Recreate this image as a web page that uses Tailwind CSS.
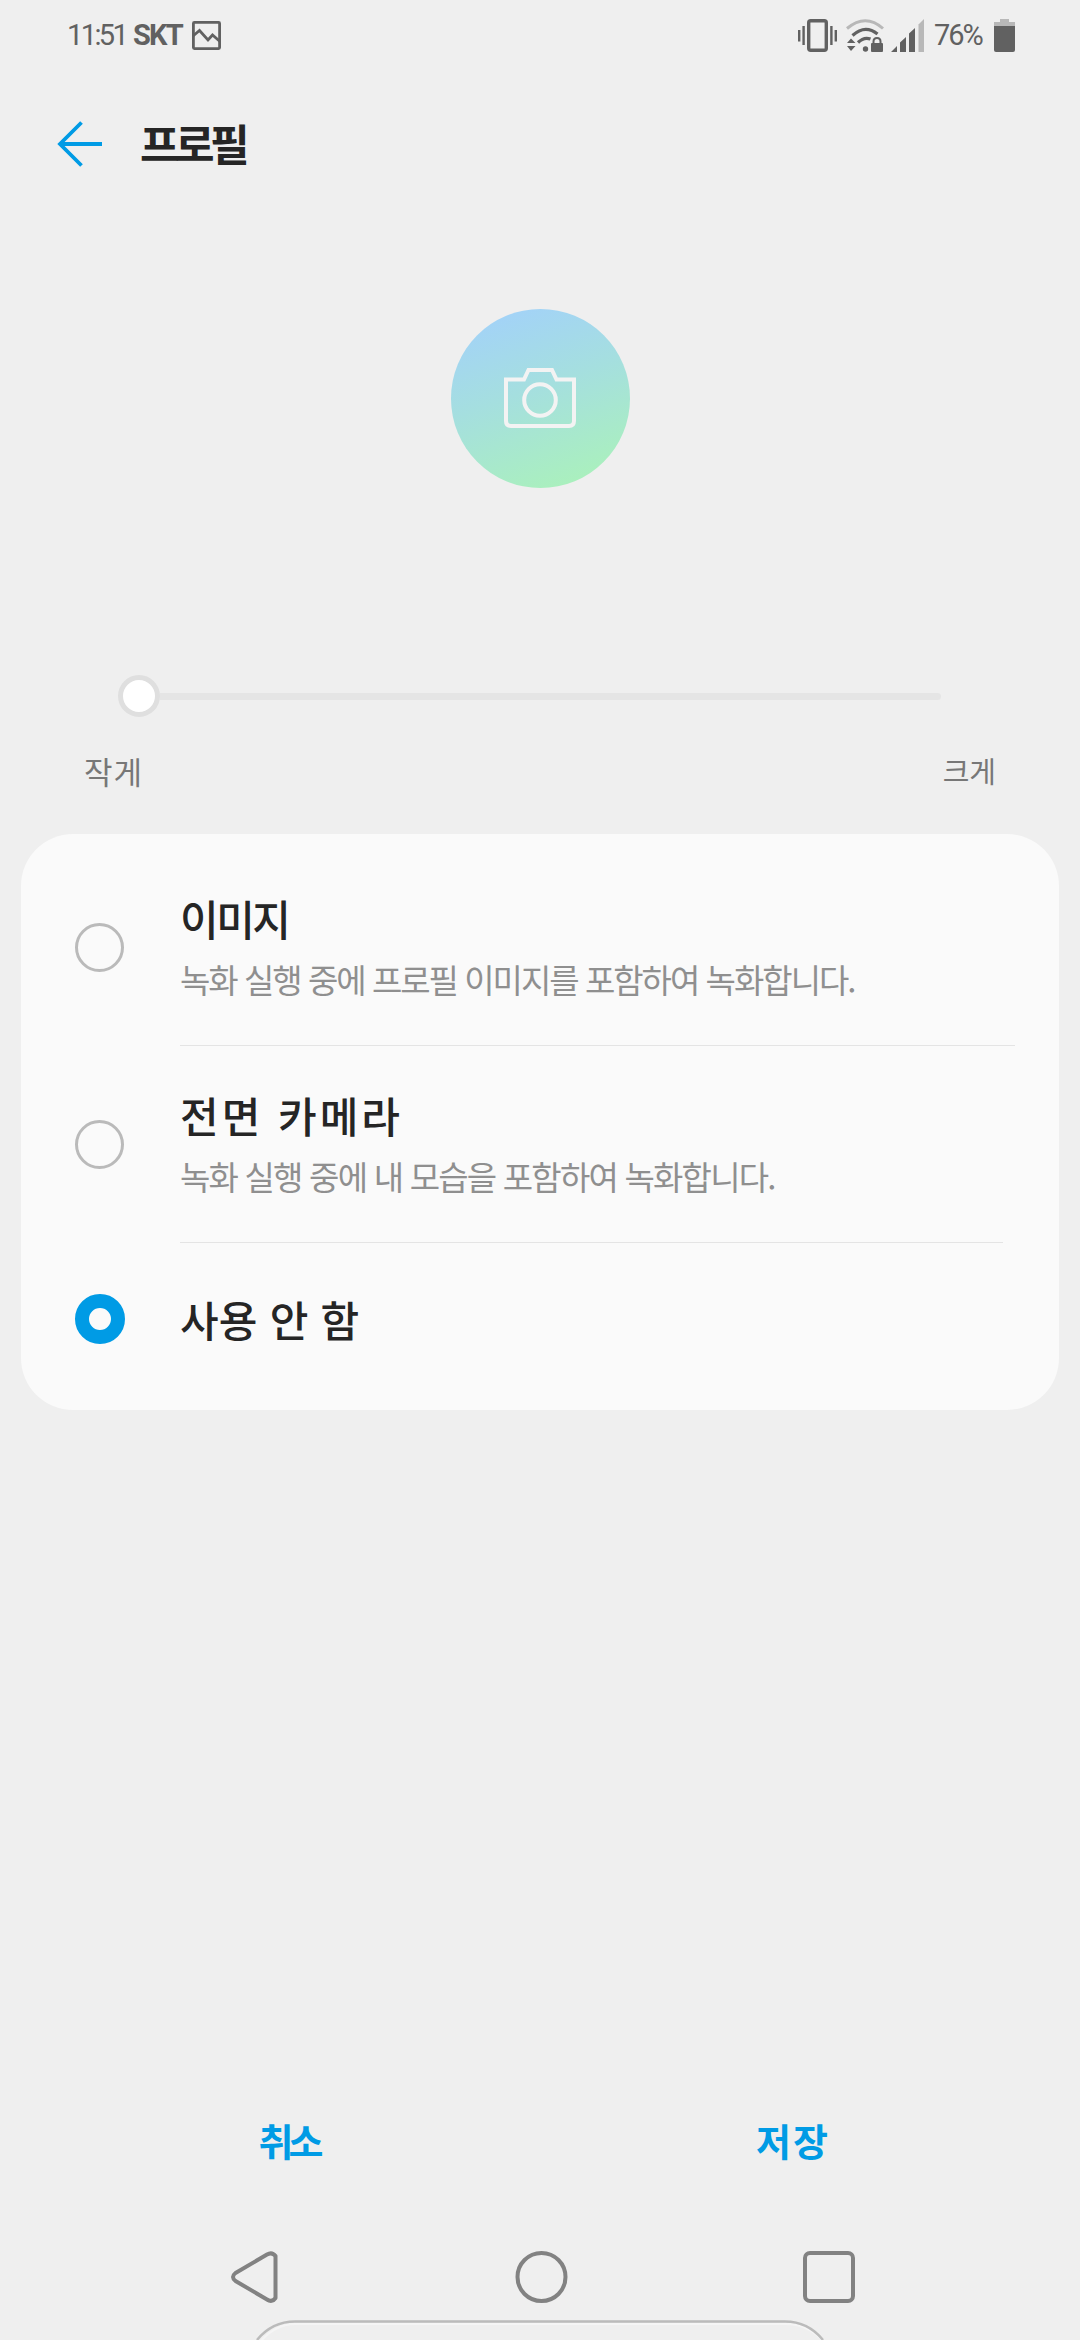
<!DOCTYPE html>
<html lang="ko">
<head>
    <meta charset="UTF-8">
    <meta name="viewport" content="width=device-width, initial-scale=1.0">
    <title>프로필</title>
    <script src="https://cdn.jsdelivr.net/npm/@tailwindcss/browser@4"></script>
</head>
<body class="bg-[#efefef] font-['Noto_Sans_CJK_KR','Noto_Sans',sans-serif]">
<div class="w-[1080px] h-[2340px] flex flex-col overflow-hidden">

    <!-- Status bar -->
    <header class="h-[70px] shrink-0 flex items-center justify-between pl-[67px] pr-[65px] text-[#616161] font-['Liberation_Sans_Narrow','Roboto',sans-serif] whitespace-nowrap">
        <div class="flex items-center">
            <span class="w-[66px] pt-[2px] text-[29px] tracking-[-2.6px]">11:51</span>
            <span class="w-[59px] pt-[2px] text-[29px] font-bold tracking-[-1.8px]">SKT</span>
            <svg class="w-[29px] h-[29px]" viewBox="0 0 29 29" fill="none" stroke="currentColor" stroke-width="2.8">
                <rect x="1.4" y="1.4" width="26.2" height="26.2" rx="1"/>
                <path d="M1 15 L7.5 9.5 L16 19 L20.5 14 L28 20.5"/>
            </svg>
        </div>
        <div class="flex items-center">
            <!-- Vibrate -->
            <svg class="w-[39px] h-[33px]" viewBox="0 0 39 33" fill="none" stroke="currentColor">
                <rect x="10.7" y="1.7" width="17.6" height="29.6" rx="2" stroke-width="3.4"/>
                <path d="M1.2 11V22.5M5.6 7V26M33.4 7V26M37.8 11V22.5" stroke-width="2.4"/>
            </svg>
            <!-- Wifi -->
            <svg class="w-[39px] h-[33px] ml-[9px]" viewBox="0 0 39 33" fill="none" stroke="currentColor">
                <path d="M1 9.5 Q19.500 -6 37 9.500" stroke="#b8b8b8" stroke-width="3"/>
                <path d="M6.500 16.500 Q19 5 31.500 15" stroke-width="3.200"/>
                <path d="M12 23.500 Q18 17.500 24.500 20" stroke-width="3.200"/>
                <circle cx="19.500" cy="30" r="2.700" fill="currentColor" stroke="none"/>
                <path d="M1 24 L5 19.500 L9.500 24Z M1 27 H9.500 L5 32Z" fill="currentColor" stroke="none"/>
                <rect x="25" y="24" width="12" height="9" rx="1" fill="currentColor" stroke="none"/>
                <path d="M27.500 25 V22.500 Q27.500 19 31 19 T34.500 22.500 V25" stroke-width="2"/>
            </svg>
            <!-- Signal -->
            <svg class="w-[33px] h-[33px] ml-[6px]" viewBox="0 0 33 33" fill="currentColor">
                <path d="M0 33 L6 27 V33Z M9 33 V23.500 L15 18 V33Z M18 33 V14.500 L24 9 V33Z"/>
                <path d="M27.500 33 V5.500 L33 0 V33Z" fill="#b8b8b8"/>
            </svg>
            <span class="ml-[10px] w-[60px] pt-[2px] text-[29px] tracking-[-2px]">76%</span>
            <!-- Battery -->
            <svg class="w-[21px] h-[33px]" viewBox="0 0 21 33" fill="currentColor">
                <path d="M6 0 H15 V3 H21 V7 H0 V3 H6Z" fill="#b8b8b8"/>
                <path d="M0 7 H21 V31 Q21 33 19 33 H2 Q0 33 0 31Z"/>
            </svg>
        </div>
    </header>

    <!-- Title bar -->
    <div class="h-[148px] shrink-0 flex items-center pl-[57px] text-[#252525]">
        <svg class="w-[46px] h-[46px]" viewBox="0 0 46 46" fill="none" stroke="#009be5" stroke-width="3.8">
            <path d="M24.500 1.500 L3 23 L24.500 44.500 M3 23 H45"/>
        </svg>
        <h1 class="ml-[37px] pb-[3px] text-[43px] font-bold tracking-[-4.5px] leading-none">프로필</h1>
    </div>

    <!-- Profile picture -->
    <div class="mt-[91px] mx-auto w-[179px] h-[179px] shrink-0 rounded-full flex items-center justify-center bg-linear-[160deg,#a3d3f7_10%,#a5dfdf_45%,#aaf0bd_90%]">
        <svg class="w-[72px] h-[60px] mb-[2px]" viewBox="0 0 72 60" fill="none" stroke="#f3f3f3" stroke-width="4">
            <path d="M2 11.500 H20 L24.500 2 H48 L52.500 11.500 H70 V53 Q70 58 65 58 H7 Q2 58 2 53Z"/>
            <circle cx="36" cy="32" r="15.800"/>
        </svg>
    </div>

    <!-- Size slider -->
    <div class="mt-[187px] ml-[118px] w-[823px] h-[42px] shrink-0 flex items-center">
        <div class="w-[42px] h-[42px] shrink-0 rounded-full bg-white border-[5px] border-[#dfdfdf]"></div>
        <div class="h-[7px] grow bg-[#e5e5e5] rounded-r-full"></div>
    </div>
    <div class="mt-[29px] h-[50px] shrink-0 flex items-center justify-between pl-[84px] pr-[84px] text-[#777777]">
        <span class="text-[31px] tracking-[1px]">작게</span>
        <span class="text-[29px]">크게</span>
    </div>

    <!-- Options -->
    <div class="mt-[38px] mx-[21px] h-[576px] shrink-0 rounded-[52px] bg-[#fafafa] pt-[14px] pl-[54px] text-[#252525] text-[42px] leading-[56px]">
        <label class="h-[198px] flex items-center">
            <span class="w-[49px] h-[49px] shrink-0 rounded-full border-[3px] border-[#bababa]"></span>
            <span class="ml-[56px] w-[835px] h-full border-b border-[#e4e4e4] flex flex-col justify-center pt-[8px]">
                <span class="font-medium tracking-[-2.5px]">이미지</span>
                <span class="text-[33px] leading-[66px] tracking-[-2px] text-[#8f8f8f] whitespace-nowrap">녹화 실행 중에 프로필 이미지를 포함하여 녹화합니다.</span>
            </span>
        </label>
        <label class="h-[197px] flex items-center">
            <span class="w-[49px] h-[49px] shrink-0 rounded-full border-[3px] border-[#bababa]"></span>
            <span class="ml-[56px] w-[823px] h-full border-b border-[#e4e4e4] flex flex-col justify-center pt-[8px]">
                <span class="font-medium tracking-[3px]">전면 카메라</span>
                <span class="text-[33px] leading-[66px] tracking-[-1.8px] text-[#8f8f8f] whitespace-nowrap">녹화 실행 중에 내 모습을 포함하여 녹화합니다.</span>
            </span>
        </label>
        <label class="h-[152px] flex items-center">
            <span class="w-[50px] h-[50px] shrink-0 rounded-full border-[14px] border-[#009be5]"></span>
            <span class="ml-[55px] font-medium tracking-[0.2px]">사용 안 함</span>
        </label>
    </div>

    <!-- Buttons -->
    <div class="mt-auto h-[100px] shrink-0 flex items-center text-[#009be5] text-[38px] font-bold">
        <button class="w-1/2 pl-[37px]"><span class="tracking-[-5px]">취소</span></button>
        <button class="w-1/2 pr-[34px]"><span class="tracking-[2px]">저장</span></button>
    </div>

    <!-- Navigation bar -->
    <div class="mt-[1px] h-[150px] shrink-0">
        <svg class="w-[1080px] h-[150px]" viewBox="0 2190 1080 150" fill="none" stroke="#828282" stroke-width="4">
            <path d="M235.500 2273 L267 2254.500 Q272 2251.500 275.500 2256 V2298 Q272 2303 267 2299.500 L235.500 2281 Q230.500 2277 235.500 2273Z" stroke-linejoin="round"/>
            <circle cx="541.500" cy="2277" r="24"/>
            <rect x="805" y="2253" width="48" height="48" rx="5"/>
            <path d="M260 2342 Q275 2324.500 295 2324 H786 Q808 2324 824 2342" stroke="#f5f5f5" stroke-width="2"/>
            <path d="M257 2340 Q272 2321.500 295 2321.500 H785 Q808 2321.500 823 2340" stroke="#bbbbbb" stroke-width="2.500"/>
        </svg>
    </div>
</div>
</body>
</html>
